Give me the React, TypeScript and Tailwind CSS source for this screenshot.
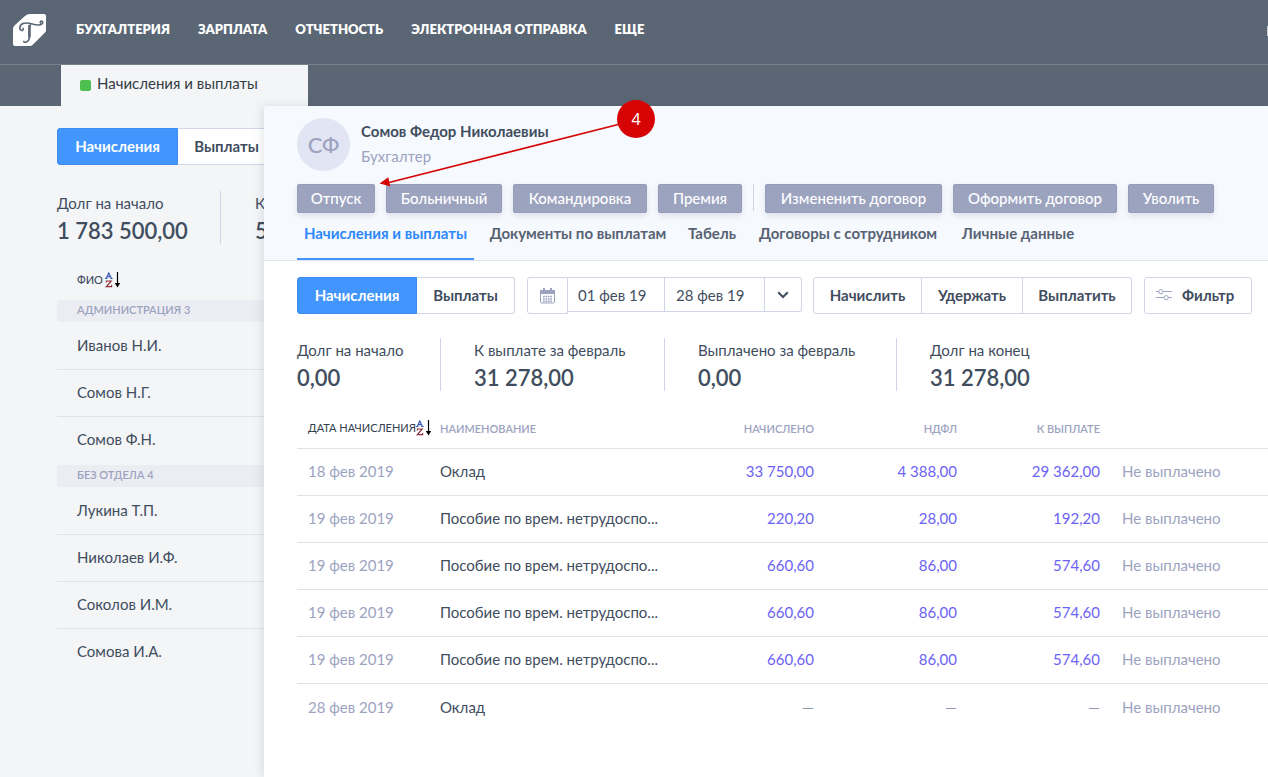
import type { ReactNode } from "react";
import clsx from "clsx";

const navItems = ["Бухгалтерия", "Зарплата", "Отчетность", "Электронная отправка", "Еще"];

const groups = [
  { title: "Администрация 3", people: ["Иванов Н.И.", "Сомов Н.Г.", "Сомов Ф.Н."] },
  { title: "Без отдела 4", people: ["Лукина Т.П.", "Николаев И.Ф.", "Соколов И.М.", "Сомова И.А."] },
];

const hrActions = [
  { label: "Отпуск", width: "w-[78px]" },
  { label: "Больничный", width: "w-[116px]" },
  { label: "Командировка", width: "w-[134px]" },
  { label: "Премия", width: "w-[84px]" },
];

const contractActions = [
  { label: "Измененить договор", width: "w-[177px]" },
  { label: "Оформить договор", width: "w-[164px]" },
  { label: "Уволить", width: "w-[86px]" },
];

const tabs = [
  { label: "Начисления и выплаты", width: "w-[177px]", active: true },
  { label: "Документы по выплатам", width: "w-[188px]" },
  { label: "Табель", width: "w-[60px]" },
  { label: "Договоры с сотрудником", width: "w-[192px]" },
  { label: "Личные данные", width: "w-[128px]" },
];

const totals = [
  { label: "Долг на начало", value: "0,00", box: "w-36 border-r" },
  { label: "К выплате за февраль", value: "31 278,00", box: "w-[224px] border-r pl-[33px]" },
  { label: "Выплачено за февраль", value: "0,00", box: "w-[232px] border-r pl-[33px]" },
  { label: "Долг на конец", value: "31 278,00", box: "pl-[33px]" },
];

const benefit = "Пособие по врем. нетрудоспо...";

const rows = [
  { date: "18 фев 2019", name: "Оклад", sums: ["33 750,00", "4 388,00", "29 362,00"] },
  { date: "19 фев 2019", name: benefit, sums: ["220,20", "28,00", "192,20"] },
  { date: "19 фев 2019", name: benefit, sums: ["660,60", "86,00", "574,60"] },
  { date: "19 фев 2019", name: benefit, sums: ["660,60", "86,00", "574,60"] },
  { date: "19 фев 2019", name: benefit, sums: ["660,60", "86,00", "574,60"] },
  { date: "28 фев 2019", name: "Оклад", sums: ["—", "—", "—"] },
];

function Logo() {
  return (
    <svg width="34" height="33" viewBox="0 0 34 33" aria-hidden="true">
      <path
        d="M17 0H31Q33 0 33 2V16Q33 17.5 32 18.5L20 30.5Q18.500 32 16.500 32H2Q0 32 0 30V15Q0 13 1.500 11.500L12 2Q14 0 17 0Z"
        fill="#fff"
      />
      <g fill="none" stroke="#5b6675" strokeLinecap="round">
        <path d="M9 16.500C6 16 5.800 11.500 10 9.600C15 7.500 20 11 25 11C29.500 11 31 8 28.800 7.200C27.500 6.800 26.800 8 27.600 9" strokeWidth="1.600" />
        <path d="M17.500 11C15.500 13 17 20 16.200 24.500C15.600 28 11.500 29.500 10.800 27.400" strokeWidth="1.600" />
        <path d="M16.400 12V22.500" strokeWidth="2.600" />
        <path d="M9 16.500C10.600 16.600 11 14.800 9.800 14.200" strokeWidth="1.300" />
      </g>
    </svg>
  );
}

function SortIcon() {
  return (
    <svg width="16" height="16" viewBox="0 0 16 16" aria-hidden="true" className="shrink-0">
      <g fill="none" strokeWidth="1.200">
        <path d="M1.200 6.500L3.800 1L6.400 6.500M2.200 4.600H5.400M0 6.500H2.400M5.200 6.500H7.600" stroke="#3a5cae" />
        <path d="M1.400 10.500V9H6.200L1.400 14.600H6.600V13" stroke="#8f2f3c" />
      </g>
      <path d="M12.500 0V13" stroke="#000" strokeWidth="1.200" />
      <path d="M9.800 11L12.500 15.500L15.200 11Z" fill="#000" />
    </svg>
  );
}

function CalendarIcon() {
  return (
    <svg width="15" height="16" viewBox="0 0 15 16" aria-hidden="true">
      <rect x="0.500" y="2.500" width="14" height="12.500" rx="1" fill="#fff" stroke="#9ca3bf" />
      <path d="M0 2H15V6H0Z" fill="#9ca3bf" />
      <path d="M4 0V3.500M11 0V3.500" stroke="#9ca3bf" strokeWidth="2" />
      <path d="M3 8.500H12M3 11H12M3 13.300H12" stroke="#9ca3bf" strokeWidth="1.500" strokeDasharray="1.700 0.730" />
    </svg>
  );
}

function FilterIcon() {
  return (
    <svg width="16" height="12" viewBox="0 0 16 12" fill="none" stroke="#9ca3bf" aria-hidden="true">
      <path d="M0 2.500H2.800M7 2.500H16M0 8.500H8M12.400 8.500H16" strokeWidth="1.200" />
      <circle cx="4.900" cy="2.700" r="2.100" />
      <circle cx="10.200" cy="8.700" r="2.100" />
    </svg>
  );
}

function Segment({ className }: { className: string }) {
  return (
    <div className="flex h-[37px] shrink-0 font-bold">
      <button className={clsx("shrink-0 rounded-l-[3px] border border-[#3d8bee] bg-[#4195fc] pb-px text-white", className)}>
        Начисления
      </button>
      <button className="w-[98px] shrink-0 rounded-r-[3px] border border-l-0 border-[#d0d5e8] bg-white pb-px">Выплаты</button>
    </div>
  );
}

function Total({ label, value, className }: { label: string; value: string; className: string }) {
  return (
    <div className={clsx("h-[53px] shrink-0 border-[#d0d5e8] pt-[2px] whitespace-nowrap", className)}>
      <div className="leading-5">{label}</div>
      <div className="mt-1 text-[22px] leading-7 font-semibold">{value}</div>
    </div>
  );
}

function ActionButton({ className, children }: { className: string; children: ReactNode }) {
  return (
    <button
      className={clsx(
        "h-[29px] shrink-0 rounded-[2px] border border-[#959cb8] bg-[#9ca3bf] font-medium whitespace-nowrap text-white shadow-[0_3px_6px_rgba(90,80,120,0.14)]",
        className,
      )}
    >
      {children}
    </button>
  );
}

function Sidebar() {
  return (
    <aside className="w-[264px] shrink-0 overflow-hidden pt-[22px] pl-[57px]">
      <Segment className="w-[121px]" />
      <div className="mt-[26px] flex">
        <Total label="Долг на начало" value="1 783 500,00" className="w-[164px] border-r" />
        <Total label="К" value="5" className="pl-[34px]" />
      </div>
      <button className="mt-7 flex h-4 items-center gap-[2px] pl-5 text-[11px] font-medium">
        ФИО
        <SortIcon />
      </button>
      <div className="mt-3">
        {groups.map((group) => (
          <section key={group.title}>
            <h2 className="my-px h-[22px] rounded-l-[3px] bg-[#ecedf3] pl-5 text-[11px] leading-5 font-semibold text-[#9ca3bf] uppercase">
              {group.title}
            </h2>
            <ul>
              {group.people.map((person) => (
                <li key={person} className="h-[47px] border-b border-[#dfe2ea] pl-5 leading-[44px] last:border-b-0">
                  <a href="#">{person}</a>
                </li>
              ))}
            </ul>
          </section>
        ))}
      </div>
    </aside>
  );
}

function Callout() {
  return (
    <svg
      width="280"
      height="90"
      viewBox="0 0 280 90"
      className="pointer-events-none absolute -top-[7px] left-[112px]"
      aria-hidden="true"
    >
      <path d="M260 21L13 83.500" stroke="#d60404" strokeWidth="1.800" />
      <path d="M3.500 84.500L12.300 78.200L14.200 87.200Z" fill="#d60404" />
      <circle cx="260" cy="20" r="19" fill="#d60404" />
      <text x="260" y="26" textAnchor="middle" fill="#fff" className="font-['Noto_Sans',sans-serif] text-base">
        4
      </text>
    </svg>
  );
}

function Toolbar() {
  return (
    <div className="flex items-start">
      <Segment className="w-[120px]" />
      <div className="ml-3 flex shrink-0">
        <button aria-label="Календарь" className="flex h-[37px] w-[41px] items-center justify-center rounded-l-[3px] border border-[#d0d5e8]">
          <CalendarIcon />
        </button>
        <input aria-label="Начало периода" defaultValue="01 фев 19" className="h-[35px] w-[97px] border border-l-0 border-[#d0d5e8] pl-[10px] outline-none" />
        <input aria-label="Конец периода" defaultValue="28 фев 19" className="h-[35px] w-[100px] border border-l-0 border-[#d0d5e8] pl-[11px] outline-none" />
        <button aria-label="Выбрать период" className="flex h-[35px] w-[37px] items-center justify-center rounded-r-[3px] border border-l-0 border-[#d0d5e8]">
          <svg width="12" height="8" viewBox="0 0 12 8" fill="none" stroke="#3f4d5e" strokeWidth="2" aria-hidden="true">
            <path d="M1.200 1.200L6 6L10.800 1.200" />
          </svg>
        </button>
      </div>
      <div className="ml-[11px] flex h-[37px] shrink-0 font-bold">
        <button className="w-[109px] rounded-l-[3px] border border-[#d0d5e8] pb-px">Начислить</button>
        <button className="w-[101px] border border-l-0 border-[#d0d5e8] pb-px">Удержать</button>
        <button className="w-[109px] rounded-r-[3px] border border-l-0 border-[#d0d5e8] pb-px">Выплатить</button>
      </div>
      <button className="ml-3 flex h-[37px] w-[108px] shrink-0 items-center gap-[10px] rounded-[3px] border border-[#d0d5e8] pb-px pl-[11px] font-bold">
        <FilterIcon />
        Фильтр
      </button>
    </div>
  );
}

function AccrualTable() {
  return (
    <table className="mt-[17px] w-full table-fixed border-collapse text-left whitespace-nowrap">
      <colgroup>
        <col className="w-[143px]" />
        <col className="w-[234px]" />
        <col className="w-[140px]" />
        <col className="w-[143px]" />
        <col className="w-[143px]" />
        <col />
      </colgroup>
      <thead>
        <tr className="h-10 border-b border-[#dfe2ea] text-[11px] text-[#9ca3bf] uppercase">
          <th className="pt-px pl-[11px] font-normal text-[#33414f]">
            <button className="flex h-4 items-center uppercase">
              Дата начисления
              <SortIcon />
            </button>
          </th>
          <th className="pt-[2px] font-semibold">Наименование</th>
          <th className="pt-[2px] text-right font-semibold">Начислено</th>
          <th className="pt-[2px] text-right font-semibold">НДФЛ</th>
          <th className="pt-[2px] text-right font-semibold">К выплате</th>
          <th aria-label="Статус" />
        </tr>
      </thead>
      <tbody>
        {rows.map((row, index) => (
          <tr key={index} className="h-[47px] border-b border-[#dfe2ea] last:border-b-0">
            <td className="pl-[11px] text-[#9ca3bf]">{row.date}</td>
            <td>{row.name}</td>
            {row.sums.map((sum, column) => (
              <td key={column} className={clsx("text-right", sum === "—" ? "text-[#8f9bb0]" : "text-[#6c63f5]")}>
                {sum}
              </td>
            ))}
            <td className="pl-[22px] text-[#9ca3bf]">Не выплачено</td>
          </tr>
        ))}
      </tbody>
    </table>
  );
}

export default function App() {
  return (
    <div className="flex min-h-screen flex-col overflow-hidden bg-[#f3f5f7] font-['Lato','Noto_Sans',sans-serif] text-[15px] text-[#3f4d5e]">
      <header className="bg-[#5b6675]">
        <div className="flex h-[65px] items-center border-b border-[#748289] pb-[3px] pl-[13px]">
          <a href="#" aria-label="Главная">
            <Logo />
          </a>
          <nav className="ml-[29px] flex gap-7 pb-px text-[13px] font-extrabold whitespace-nowrap text-white uppercase">
            {navItems.map((item) => (
              <a key={item} href="#">
                {item}
              </a>
            ))}
          </nav>
          <span className="ml-auto h-[10px] w-px bg-[#c9cdd3]" />
        </div>
        <div className="flex h-[41px] pl-[61px]">
          <a href="#" className="flex w-[247px] items-center gap-[6px] bg-[#f3f5f7] pb-1 pl-[19px] text-[#333b45]">
            <span className="mt-1 size-[11px] rounded-[2px] bg-[#4fc04f]" />
            Начисления и выплаты
          </a>
        </div>
      </header>

      <div className="flex flex-1">
        <Sidebar />
        <main className="relative min-w-0 flex-1 rounded-tl-[4px] bg-white shadow-[-2px_0_10px_rgba(60,70,90,0.13)]">
          <div className="rounded-tl-[4px] border-b border-[#dfe3f0] bg-[#f6f9fe] pl-[33px]">
            <div className="flex items-center gap-[11px] pt-3">
              <div className="flex size-[53px] items-center justify-center rounded-full bg-[#e2e5f4] text-[22px] font-medium text-[#9ca3bf]">
                СФ
              </div>
              <div className="pb-[2px]">
                <h1 className="leading-[25px] font-bold">Сомов Федор Николаевиы</h1>
                <p className="leading-[25px] text-[#9ca3bf]">Бухгалтер</p>
              </div>
            </div>
            <div className="mt-[13px] flex gap-[11px]">
              {hrActions.map((action) => (
                <ActionButton key={action.label} className={action.width}>
                  {action.label}
                </ActionButton>
              ))}
              <span className="h-[27px] w-px bg-[#d0d5e8]" />
              {contractActions.map((action) => (
                <ActionButton key={action.label} className={action.width}>
                  {action.label}
                </ActionButton>
              ))}
            </div>
            <nav className="flex gap-[10px] font-bold whitespace-nowrap text-[#566273]">
              {tabs.map((tab) => (
                <a
                  key={tab.label}
                  href="#"
                  className={clsx(
                    "h-[47px] shrink-0 border-b-2 text-center leading-10",
                    tab.width,
                    tab.active ? "border-[#4195fc] text-[#2c88fb]" : "border-transparent",
                  )}
                >
                  {tab.label}
                </a>
              ))}
            </nav>
          </div>
          <div className="pt-4 pl-[33px]">
            <Toolbar />
            <div className="mt-6 flex">
              {totals.map((total) => (
                <Total key={total.label} label={total.label} value={total.value} className={total.box} />
              ))}
            </div>
            <AccrualTable />
          </div>
          <Callout />
        </main>
      </div>
    </div>
  );
}
